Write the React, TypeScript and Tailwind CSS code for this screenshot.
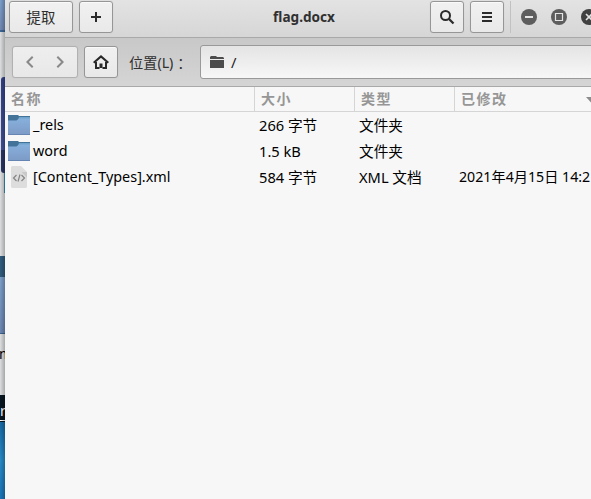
import type { ReactNode } from 'react';

const FONT = "font-['Noto_Sans','Noto_Sans_CJK_SC',sans-serif]";

function ToolButton({ className = '', children }: { className?: string; children: ReactNode }) {
  return (
    <button
      className={`flex shrink-0 items-center justify-center rounded-[3px] border border-[#969696] bg-linear-to-b from-[#f1f1f1] to-[#e9e9e9] shadow-[inset_0_1px_0_#fafafa,0_0_1px_#bcbcbc] ${className}`}
    >
      {children}
    </button>
  );
}

function Folder() {
  return (
    <svg width="22" height="20" viewBox="0 0 22 20" className="block">
      <defs>
        <linearGradient id="folder" x1="0" y1="0" x2="0" y2="1">
          <stop offset="0" stopColor="#87b0dc" />
          <stop offset="1" stopColor="#7e9bc7" />
        </linearGradient>
      </defs>
      <path d="M0 0h10l1 1h11V6H0z" fill="#437398" />
      <path d="M11 2h11v3H10z" fill="#6ea3cb" />
      <path d="M0 5.5h8.5L11 3.5h11V19H0z" fill="url(#folder)" />
      <path d="M0 19h22v1H0z" fill="#6785b2" />
    </svg>
  );
}

function XmlFile() {
  return (
    <svg width="16" height="22" viewBox="0 0 16 22" className="block" fill="none">
      <path d="M1 0h9l6 6v15l-1 1H1l-1-1V1z" fill="#dddddd" />
      <path d="M10 5.5l6 6V6h-6z" fill="#c9c9c9" />
      <path d="M5.5 9L2.5 12l3 3M10.5 9l3 3-3 3M9 8.5l-2 7" stroke="#858585" strokeWidth="1.2" />
    </svg>
  );
}

function Desktop() {
  return (
    <div className="relative flex w-[5px] shrink-0 flex-col overflow-hidden bg-[#dedfe0]">
      <div className="h-[32px] shrink-0 border-b-2 border-[#3d6898] bg-linear-to-b from-[#7ba0cd] to-[#7289b4]" />
      <div className="h-[45px] shrink-0" />
      <div className="ml-px h-[73px] shrink-0 rounded-tl-[3px] bg-linear-to-b from-[#34428a] to-[#41529b]" />
      <div className="ml-px h-[23px] shrink-0 rounded-bl-[3px] bg-[#293667]" />
      <div className="ml-[4px] h-[20px] shrink-0 bg-[#3c8dbd]" />
      <div className="h-[63px] shrink-0" />
      <div className="h-[21px] shrink-0 bg-[#315c7e]" />
      <div className="h-[57px] shrink-0 border-b border-[#3f628e] bg-linear-to-b from-[#7da1cd] to-[#6c87b4]" />
      <div className="h-[61px] shrink-0 pt-[10px] text-[14px] leading-[20px] text-black">
        <span className="-ml-px">m</span>
      </div>
      <div className="h-[27px] shrink-0 bg-[#071722] pt-[7px] text-[14px] leading-[17px] text-white underline underline-offset-4">
        r
      </div>
      <div className="grow bg-linear-to-b from-[#1769a5] via-[#278bc9] to-[#1975b8]" />
      <div className="absolute inset-0 bg-linear-to-r from-transparent to-black/25" />
    </div>
  );
}

const rows = [
  { icon: 'folder', name: '_rels', size: '266 字节', type: '文件夹', date: '' },
  { icon: 'folder', name: 'word', size: '1.5 kB', type: '文件夹', date: '' },
  { icon: 'xml', name: '[Content_Types].xml', size: '584 字节', type: 'XML 文档', date: '2021年4月15日 14:2' },
];

const COLS = 'grid grid-cols-[250px_100px_100px_200px]';

export default function App() {
  return (
    <div className={`flex h-[499px] w-[591px] overflow-hidden text-[14.67px] text-[#111] ${FONT}`}>
      <Desktop />
      <div className="flex w-[586px] flex-col overflow-hidden bg-[#f7f7f7]">
        <header className="flex h-[38px] shrink-0 items-start border-b border-[#a9a9a9] bg-linear-to-b from-[#e3e3e3] to-[#d6d6d6] pt-px pl-[4px]">
          <ToolButton className="h-[32px] w-[64px] pt-px text-[14.4px] text-[#2e2e2e]">提取</ToolButton>
          <ToolButton className="ml-[6px] h-[32px] w-[34px]">
            <svg width="10" height="10" viewBox="0 0 10 10">
              <path d="M4 0h2v4h4v2H6v4H4V6H0V4h4z" fill="#2b2b2b" />
            </svg>
          </ToolButton>
          <div className="mt-[5px] ml-[160px] w-[157px] shrink-0 text-[13.6px] leading-[22px] font-bold text-[#303030]">flag.docx</div>
          <ToolButton className="h-[32px] w-[34px]">
            <svg width="16" height="16" viewBox="0 0 16 16" fill="none" stroke="#2b2b2b">
              <circle cx="6.5" cy="6.5" r="4.5" strokeWidth="2" />
              <path d="M10 10l4.5 4.5" strokeWidth="2.3" />
            </svg>
          </ToolButton>
          <ToolButton className="ml-[6px] h-[32px] w-[34px]">
            <svg width="10" height="10" viewBox="0 0 10 10">
              <path d="M0 0h10v2H0zM0 4h10v2H0zM0 8h10v2H0z" fill="#2b2b2b" />
            </svg>
          </ToolButton>
          <div className="ml-[6px] h-[32px] w-px shrink-0 bg-[#c1c1c1]" />
          <div className="mt-[8px] ml-[10px] flex shrink-0 gap-[14px]">
            <svg width="16" height="16" viewBox="0 0 16 16">
              <circle cx="8" cy="8" r="8" fill="#5d5d5d" />
              <path d="M4 7h8v2H4z" fill="#e4e4e4" />
            </svg>
            <svg width="16" height="16" viewBox="0 0 16 16">
              <circle cx="8" cy="8" r="8" fill="#5d5d5d" />
              <path d="M4.5 4.5h7v7h-7z" fill="none" stroke="#e4e4e4" strokeWidth="1.2" />
            </svg>
            <svg width="16" height="16" viewBox="0 0 16 16">
              <circle cx="8" cy="8" r="8" fill="#414141" />
              <path d="M5 5l6 6M11 5l-6 6" stroke="#e4e4e4" strokeWidth="1.6" />
            </svg>
          </div>
        </header>

        <nav className="flex h-[49px] shrink-0 items-start border-b border-[#a9a9a9] bg-linear-to-b from-[#c8c8c8] to-[#d5d5d5] pt-[7px] pl-[7px]">
          <div className="mt-px flex h-[32px] w-[66px] shrink-0 items-center justify-between rounded-[3px] border border-[#b1b1b1] bg-linear-to-b from-[#eeeeee] to-[#e8e8e8] px-[13px] shadow-[0_0_1px_#b5b5b5]">
            <svg width="8" height="12" viewBox="0 0 8 12" fill="none" stroke="#898989" strokeWidth="2">
              <path d="M6.7.7L1.4 6l5.3 5.3" />
            </svg>
            <svg width="8" height="12" viewBox="0 0 8 12" fill="none" stroke="#898989" strokeWidth="2">
              <path d="M1.3.7L6.6 6l-5.3 5.3" />
            </svg>
          </div>
          <ToolButton className="mt-px ml-[6px] h-[32px] w-[34px]">
            <svg width="16" height="14" viewBox="0 0 16 14" fill="none" stroke="#292929" strokeWidth="2">
              <path d="M.7 7.8L8 1.4l7.3 6.4" />
              <path d="M3 7v6h3.5M9.5 13H13V7" />
              <path d="M6.5 13V8.5h3V13" fill="#292929" stroke="none" />
            </svg>
          </ToolButton>
          <div className="mt-[7px] ml-[11px] flex w-[71px] shrink-0 text-[14.2px] leading-[22px] text-[#303030]">
            <span>位置(L)</span>
            <span className="ml-[4px]">：</span>
          </div>
          <div className="flex h-[34px] w-[410px] shrink-0 items-center rounded-[3px] border border-[#999] bg-linear-to-b from-[#e4e4e4] to-[#f7f7f7] pl-[9px] text-[#222]">
            <svg width="14" height="12" viewBox="0 0 14 12" fill="#4c4c4c">
              <path d="M0 1l1-1h5l1 1h6l1 1v1H0zM0 4h14v8H0z" />
            </svg>
            <span className="ml-[7px] text-[14.67px]">/</span>
          </div>
        </nav>

        <div className={`${COLS} h-[25px] shrink-0 border-b border-[#d5d5d5] text-[14px] leading-[24px] font-bold tracking-[1.5px] text-[#969696]`}>
          <div className="border-r border-[#d5d5d5] pl-[6px]">名称</div>
          <div className="border-r border-[#d5d5d5] pl-[6px]">大小</div>
          <div className="border-r border-[#d5d5d5] pl-[6px]">类型</div>
          <div className="flex pl-[6px]">
            <span className="w-[125px] shrink-0">已修改</span>
            <svg width="10" height="6" viewBox="0 0 10 6" className="mt-[10px] shrink-0">
              <path d="M0 0h10L5 5.5z" fill="#8c8c8c" />
            </svg>
          </div>
        </div>

        <main className="flex flex-col text-black">
          {rows.map((row) => (
            <div key={row.name} className={`${COLS} h-[26px] shrink-0 leading-[26px] whitespace-nowrap`}>
              <div className="flex h-[26px] items-center pl-[3px]">
                <span className="flex w-[22px] justify-center">{row.icon === 'folder' ? <Folder /> : <XmlFile />}</span>
                <span className="ml-[3px] text-[14.4px]">{row.name}</span>
              </div>
              <div className="h-[26px] pl-[4px] text-[14.67px]">{row.size}</div>
              <div className="h-[26px] pl-[4px] text-[14.67px]">{row.type}</div>
              <div className="h-[26px] pl-[4px] text-[14.2px]">{row.date}</div>
            </div>
          ))}
        </main>
      </div>
    </div>
  );
}
